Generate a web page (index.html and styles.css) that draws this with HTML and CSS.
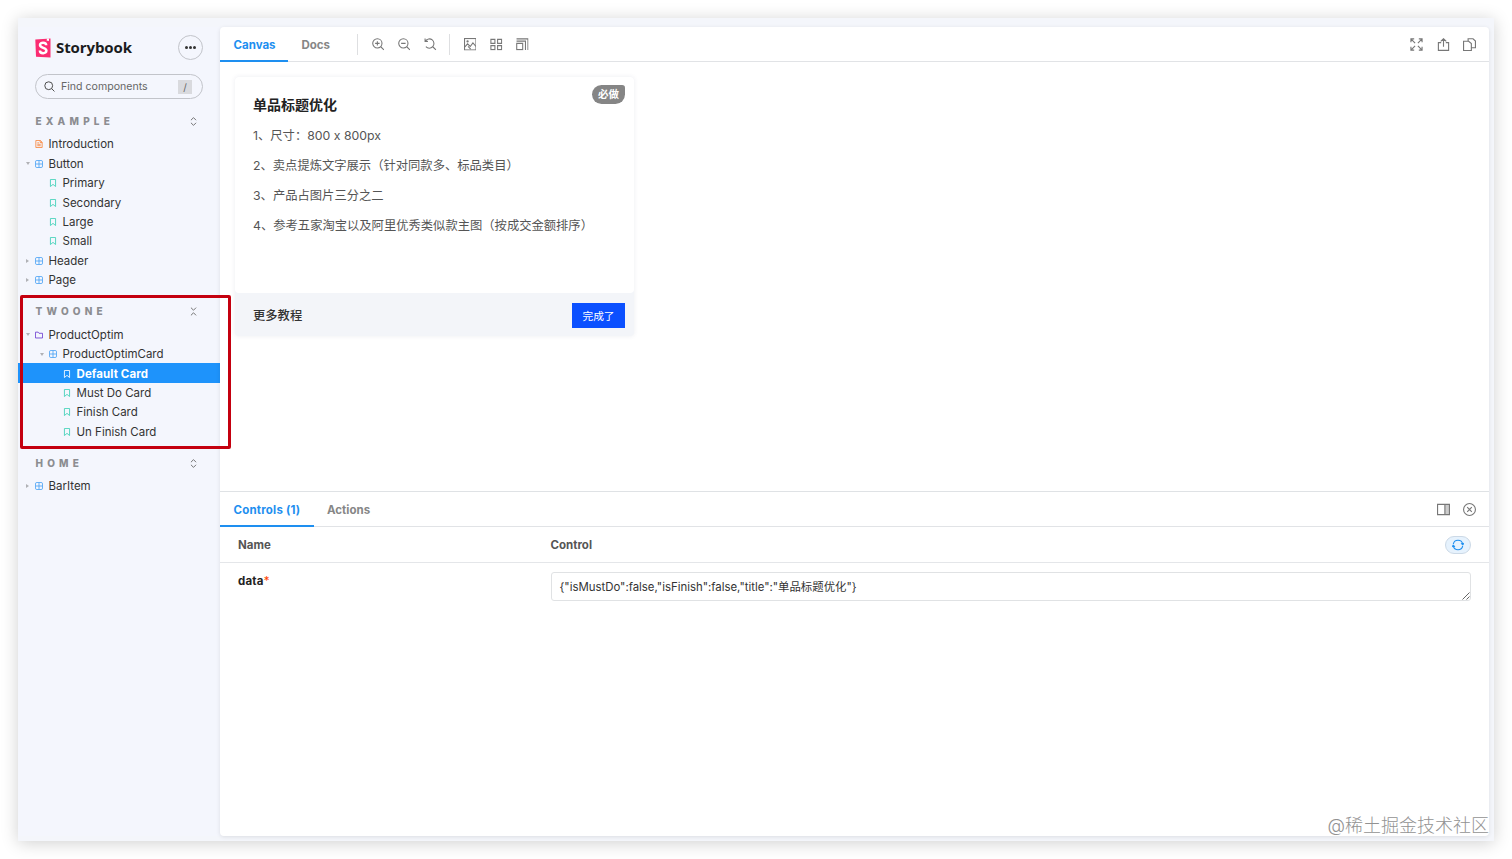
FILE: index.html
```
<!DOCTYPE html>
<html lang="zh-CN">
<head>
    <meta charset="UTF-8">
    <meta name="viewport" content="width=device-width, initial-scale=1.0">
    <title>Storybook</title>
    <link rel="stylesheet" href="styles.css">
</head>
<body>
    <!-- icon set -->
    <svg class="sprite">
        <symbol id="doc" viewBox="0 0 14 14"><path d="M1.5.8h8L12.5 4v9.2h-11zM9 1v3.5h3.5M4 5h3M4 7.5h6M4 10h6"/></symbol>
        <symbol id="component" viewBox="0 0 14 14"><rect x=".8" y=".8" width="12.4" height="12.4" rx="2.5"/><path d="M7 1v12M1 7h12"/></symbol>
        <symbol id="story" viewBox="0 0 14 14"><path d="M2.5.8h9v12.4L7 9.4l-4.500 3.800z"/></symbol>
        <symbol id="folder" viewBox="0 0 14 14"><path d="M.8 2h4.700l1.500 2h6.200v8.200H.8z"/></symbol>
        <symbol id="expand" viewBox="0 0 14 14"><path d="M3 5l4-4 4 4M3 9l4 4 4-4"/></symbol>
        <symbol id="collapse" viewBox="0 0 14 14"><path d="M3 1l4 4 4-4M3 13l4-4 4 4"/></symbol>
        <symbol id="search" viewBox="0 0 14 14"><circle cx="6" cy="6" r="5"/><path d="M9.700 9.700l3.600 3.600"/></symbol>
        <symbol id="zoomin" viewBox="0 0 14 14"><circle cx="6" cy="6" r="5.200"/><path d="M9.800 9.800l3.600 3.600M3.500 6h5M6 3.500v5"/></symbol>
        <symbol id="zoomout" viewBox="0 0 14 14"><circle cx="6" cy="6" r="5.200"/><path d="M9.800 9.800l3.600 3.600M3.500 6h5"/></symbol>
        <symbol id="zoomreset" viewBox="0 0 14 14"><path d="M1.700 3.200A5.200 5.200 0 1 1 2.100 9.700M1.200.6v3.200h3.200M9.800 9.800l3.600 3.600"/></symbol>
        <symbol id="photo" viewBox="0 0 14 14"><rect x=".6" y=".6" width="12.800" height="12.800"/><path d="M1 10l3-3.500 3 3 3-4 3.400 4M4.500 9.500l3 3"/><circle cx="4" cy="3.800" r=".7"/></symbol>
        <symbol id="grid" viewBox="0 0 14 14"><path d="M1 1.500h4.500v4.500H1zM8.500 1.500H13v4.500H8.500zM1 8.500h4.500V13H1zM8.500 8.500H13V13H8.500z"/></symbol>
        <symbol id="grow" viewBox="0 0 14 14"><path d="M.8 6h6.700v7H.8zM.6 1h12.800v12.500M.6 3.500h10v10"/></symbol>
        <symbol id="full" viewBox="0 0 14 14"><path d="M1 4.500V1h3.500M1 1l4.500 4.500M9.500 1H13v3.500M13 1L8.500 5.500M1 9.500V13h3.500M1 13l4.500-4.500M13 9.500V13H9.500M13 13L8.500 8.500"/></symbol>
        <symbol id="share" viewBox="0 0 14 14"><path d="M4.500 5H1.500v8.300h11V5h-3M7 9.500V1M4 3.700L7 .8l3 2.900"/></symbol>
        <symbol id="copy" viewBox="0 0 14 14"><path d="M5.500 3.200V.8h5.300l2.600 2.500v7.200H9M.6 3.500h5.500L9 6v7.400H.6z"/></symbol>
        <symbol id="side" viewBox="0 0 14 14"><path class="solid" d="M8.500 1.500h4.900v11H8.500z"/><path d="M.6 1.500h12.800v11H.6zM8.500 1.500v11"/></symbol>
        <symbol id="close" viewBox="0 0 14 14"><circle cx="7" cy="7" r="6.400"/><path d="M4.500 4.500l5 5M9.500 4.500l-5 5"/></symbol>
        <symbol id="sync" viewBox="0 0 14 14"><path d="M1.500 6A5.600 5.600 0 0 1 12.500 6M12.500 8A5.600 5.600 0 0 1 1.500 8M10.500 5l2.200 1.800L14 4.700M3.500 9L1.300 7.200 0 9.300"/></symbol>
    </svg>

    <div class="app">
        <div class="sidebar">
            <div class="brand">
                <svg class="logo" viewBox="0 0 16 20"><path fill="#fb2c72" d="M.3 1.500L15.500.5v19L1 18.800z"/><path fill="#fff" d="M11.800.5l2.200-.1v2.900l-1.100-.8-1.100.8z"/><path class="mark" d="M11.200 7.300c0-3.600-6.200-3.400-6.200-.3 0 3.400 6.400 2.500 6.400 5.700 0 3.400-6.500 3.200-6.500-.3"/></svg>
                <span class="name">Storybook</span>
                <div class="more"><i></i><i></i><i></i></div>
            </div>
            <div class="search">
                <svg class="icon"><use href="#search"/></svg>
                <span>Find components</span>
                <b>/</b>
            </div>

            <div class="section">
                <div class="heading">EXAMPLE<svg class="icon"><use href="#expand"/></svg></div>
                <ul>
                    <li class="doc"><svg class="icon"><use href="#doc"/></svg>Introduction</li>
                    <li class="component open"><svg class="icon"><use href="#component"/></svg>Button</li>
                    <li class="story lv2"><svg class="icon"><use href="#story"/></svg>Primary</li>
                    <li class="story lv2"><svg class="icon"><use href="#story"/></svg>Secondary</li>
                    <li class="story lv2"><svg class="icon"><use href="#story"/></svg>Large</li>
                    <li class="story lv2"><svg class="icon"><use href="#story"/></svg>Small</li>
                    <li class="component closed"><svg class="icon"><use href="#component"/></svg>Header</li>
                    <li class="component closed"><svg class="icon"><use href="#component"/></svg>Page</li>
                </ul>
            </div>
            <div class="section">
                <div class="heading">TWOONE<svg class="icon"><use href="#collapse"/></svg></div>
                <ul>
                    <li class="folder open"><svg class="icon"><use href="#folder"/></svg>ProductOptim</li>
                    <li class="component open lv2"><svg class="icon"><use href="#component"/></svg>ProductOptimCard</li>
                    <li class="story lv3 selected"><svg class="icon"><use href="#story"/></svg>Default Card</li>
                    <li class="story lv3"><svg class="icon"><use href="#story"/></svg>Must Do Card</li>
                    <li class="story lv3"><svg class="icon"><use href="#story"/></svg>Finish Card</li>
                    <li class="story lv3"><svg class="icon"><use href="#story"/></svg>Un Finish Card</li>
                </ul>
            </div>
            <div class="section">
                <div class="heading">HOME<svg class="icon"><use href="#expand"/></svg></div>
                <ul>
                    <li class="component closed"><svg class="icon"><use href="#component"/></svg>BarItem</li>
                </ul>
            </div>
        </div><!-- sidebar -->

        <div class="main">
            <div class="bar">
                <div class="tab active canvas-tab">Canvas</div>
                <div class="tab docs-tab">Docs</div>
                <div class="tools">
                    <svg class="icon"><use href="#zoomin"/></svg>
                    <svg class="icon"><use href="#zoomout"/></svg>
                    <svg class="icon"><use href="#zoomreset"/></svg>
                </div>
                <div class="tools">
                    <svg class="icon"><use href="#photo"/></svg>
                    <svg class="icon"><use href="#grid"/></svg>
                    <svg class="icon"><use href="#grow"/></svg>
                </div>
                <div class="right">
                    <svg class="icon"><use href="#full"/></svg>
                    <svg class="icon"><use href="#share"/></svg>
                    <svg class="icon"><use href="#copy"/></svg>
                </div>
            </div>
            <div class="preview">
                <div class="card">
                    <div class="card-body">
                        <span class="badge">必做</span>
                        <h3>单品标题优化</h3>
                        <p>1、尺寸：800 x 800px</p>
                        <p>2、卖点提炼文字展示（针对同款多、标品类目）</p>
                        <p>3、产品占图片三分之二</p>
                        <p>4、参考五家淘宝以及阿里优秀类似款主图（按成交金额排序）</p>
                    </div>
                    <div class="card-foot">
                        <span>更多教程</span>
                        <button>完成了</button>
                    </div>
                </div>
            </div>
            <div class="addons">
                <div class="bar">
                    <div class="tab active controls-tab">Controls (1)</div>
                    <div class="tab actions-tab">Actions</div>
                    <div class="right">
                        <svg class="icon"><use href="#side"/></svg>
                        <svg class="icon"><use href="#close"/></svg>
                    </div>
                </div>
                <div class="row head">
                    <span>Name</span>
                    <span>Control</span>
                    <div class="reset"><svg class="icon"><use href="#sync"/></svg></div>
                </div>
                <div class="row">
                    <span class="arg">data<em>*</em></span>
                    <div class="field"><span>{"isMustDo":false,"isFinish":false,"title":"单品标题优化"}</span><svg class="grip" viewBox="0 0 8 8"><path d="M.5 7.500l7-7M4.500 7.500l3-3"/></svg></div>
                </div>
            </div>
        </div><!-- main -->
    </div><!-- app -->

    <div class="highlight"></div>
    <div class="watermark">@稀土掘金技术社区</div>
</body>
</html>
```
FILE: styles.css
```
*{
    box-sizing: border-box;
}
html, body{
    height: 100%;
    margin: 0;
}
body{
    padding: 18px;
    background: #fff;
    font-family: Inter, "Noto Sans CJK SC", sans-serif;
    font-size: 11.5px;
    color: #333;
    overflow: hidden;
}
ul{
    list-style: none;
    margin: 0;
    padding: 0;
}
.sprite{
    display: none;
}
.icon{
    flex: none;
    width: 12px;
    height: 12px;
    fill: none;
    stroke: #777;
    stroke-width: 1.2;
}
.solid{
    fill: #ccc;
    stroke: none;
}
.app{
    display: flex;
    width: 1476px;
    height: 823px;
    padding: 9px 5px 5px 0;
    background: #f4f6fb;
    box-shadow: 0 2px 16px rgba(0,0,0,.19);
}

/* sidebar */
.sidebar{
    width: 202px;
    background: #f4f6fd;
}
.brand{
    display: flex;
    align-items: center;
    height: 25px;
    margin: 8px 17px 14px;
}
.logo{
    width: 16px;
    height: 20px;
}
.mark{
    fill: none;
    stroke: #fff;
    stroke-width: 2.5;
}
.name{
    margin-left: 5px;
    padding-bottom: 2px;
    font-family: "Open Sans", sans-serif;
    font-size: 15px;
    font-weight: 700;
    letter-spacing: -.1px;
    color: #1b1c1d;
}
.more{
    display: flex;
    justify-content: center;
    align-items: center;
    gap: 1px;
    width: 25px;
    height: 25px;
    margin-left: auto;
    border: 1px solid #c2c4ca;
    border-radius: 50%;
}
.more i{
    width: 3px;
    height: 3px;
    border-radius: 50%;
    background: #333;
}
.search{
    display: flex;
    align-items: center;
    height: 25px;
    margin: 0 17px 13.5px;
    padding: 0 10px 0 8px;
    border: 1px solid #c2c4ca;
    border-radius: 13px;
    font-size: 10.6px;
    color: #666;
}
.search .icon{
    width: 11px;
    height: 11px;
    margin-right: 6px;
    stroke: #444;
}
.search b{
    width: 14px;
    height: 14px;
    margin-left: auto;
    background: #d9dade;
    font-size: 10px;
    font-weight: 400;
    line-height: 14px;
    text-align: center;
}
.section{
    margin-bottom: 13.6px;
}
.heading{
    display: flex;
    justify-content: space-between;
    align-items: center;
    height: 18px;
    margin-bottom: 3.700px;
    padding: 0 22px 1px 17.5px;
    font-size: 10px;
    font-weight: 800;
    letter-spacing: 4.200px;
    color: #8c8d91;
}
.heading .icon{
    position: relative;
    top: .5px;
    width: 9px;
    height: 9px;
    stroke: #666;
    stroke-width: 1.4;
}
.section li{
    display: flex;
    align-items: center;
    height: 19.4px;
    padding-top: 1px;
    padding-left: 17px;
}
.section li.lv2{
    padding-left: 31px;
}
.section li.lv3{
    padding-left: 45px;
}
.section li .icon{
    width: 8px;
    height: 8px;
    margin-right: 5.5px;
    stroke-width: 1.5;
}
.doc .icon{ stroke: #f8873e; }
.section .component .icon{ stroke: #4ea4f5; }
.section .story .icon{ stroke: #3fd0b6; }
.section .folder .icon{ stroke: #6f3fd0; }
.open::before, .closed::before{
    content: "";
    width: 0;
    height: 0;
    margin-left: -9px;
    margin-right: 4px;
    border: 2.5px solid transparent;
    border-top: 3px solid #b0b1b5;
    border-bottom: 0;
}
.open::before{
    margin-right: 5px;
}
.closed::before{
    margin-right: 6px;
    border: 2px solid transparent;
    border-left: 3px solid #b0b1b5;
    border-right: 0;
}
.section .selected{
    background: #1e93fb;
    color: #fff;
    font-weight: 700;
    letter-spacing: .1px;
}
.section .selected .icon{
    stroke: #fff;
}

/* main */
.main{
    display: flex;
    flex-direction: column;
    flex: 1;
    background: #fff;
    border-radius: 4px;
    box-shadow: 0 1px 4px rgba(0,0,0,.1);
}
.bar{
    display: flex;
    align-items: center;
    height: 35px;
    border-bottom: 1px solid #e1e3e6;
    font-weight: 700;
    color: #868686;
}
.tab{
    height: 35px;
    padding: 0 13.5px;
    line-height: 36px;
    white-space: nowrap;
}
.tab.active{
    border-bottom: 2.500px solid #1e8ff0;
    color: #1e8ff0;
}
.canvas-tab{ width: 68px; }
.docs-tab{ width: 69px; }
.controls-tab{
    width: 93.5px;
    letter-spacing: .2px;
}
.tools{
    display: flex;
    align-items: center;
    gap: 14.3px;
    height: 21px;
    padding: 0 13px 0 14px;
    border-left: 1px solid #dedfe1;
}
.bar .icon{
    width: 13px;
    height: 13px;
}
.right{
    display: flex;
    gap: 13.5px;
    margin-left: auto;
    padding-right: 13px;
}
.tools .icon{
    width: 12.5px;
    height: 12.5px;
}
.tools{
    gap: 13.8px;
    padding: 1px 12.7px 0 13.500px;
}
.preview{
    height: 429px;
    padding: 15px;
}
.card{
    width: 399px;
    height: 259px;
    background: #f3f5f9;
    border-radius: 4px;
    box-shadow: 0 0 5px rgba(40,60,100,.09);
}
.card-body{
    position: relative;
    height: 216px;
    padding: 15px 18px;
    background: #fff;
    border-radius: 4px;
    font-size: 12.3px;
    color: #555;
}
.card h3{
    margin: 0 0 7px;
    font-size: 14px;
    font-weight: 700;
    line-height: 26px;
    color: #222;
}
.card p{
    height: 22px;
    margin: 0 0 8px;
    line-height: 22px;
    white-space: nowrap;
}
.badge{
    position: absolute;
    top: 8px;
    right: 9px;
    width: 33px;
    height: 19px;
    background: #858585;
    border-radius: 10px 3px 10px 10px;
    font-size: 10.5px;
    font-weight: 700;
    line-height: 19px;
    text-align: center;
    color: #fff;
}
.card-foot{
    display: flex;
    justify-content: space-between;
    align-items: center;
    height: 44px;
    padding: 0 9px 0 18px;
    font-size: 12.3px;
    font-weight: 500;
}
.card-foot button{
    width: 53px;
    height: 25px;
    padding: 0;
    border: 0;
    background: #0b50ff;
    font-family: inherit;
    font-size: 10.700px;
    color: #fff;
}
.addons{
    flex: 1;
    border-top: 1px solid #dfe2e5;
}
.row{
    display: grid;
    grid-template-columns: 312.5px 1fr auto;
    padding: 9px 18px;
}
.head{
    align-items: center;
    height: 36px;
    border-bottom: 1px solid #e4e6e9;
    font-weight: 700;
    color: #555;
}
.reset{
    display: flex;
    justify-content: center;
    align-items: center;
    width: 26px;
    height: 18px;
    border: 1px solid #ccd9e6;
    border-radius: 9px;
    background: #e6f2fd;
}
.reset .icon{
    stroke: #1e8ff0;
}
.arg{
    font-weight: 700;
    line-height: 19px;
    letter-spacing: .2px;
    color: #222;
}
.arg em{
    font-style: normal;
    font-weight: 400;
    color: #ff4400;
}
.field{
    display: flex;
    justify-content: space-between;
    align-items: center;
    grid-column: 2 / 4;
    height: 28.500px;
    padding-left: 8px;
    border: 1px solid #e0e2e4;
    border-radius: 3px;
    font-size: 11.4px;
}
.grip{
    align-self: flex-end;
    width: 8px;
    height: 8px;
    fill: none;
    stroke: #666;
}

/* annotation frame and watermark over the window */
.highlight{
    position: absolute;
    left: 20px;
    top: 295px;
    width: 211px;
    height: 154px;
    border: 3.500px solid #c4000f;
    border-radius: 2px;
}
.watermark{
    position: absolute;
    right: 23px;
    bottom: 20px;
    font-size: 18px;
    font-weight: 300;
    line-height: 26px;
    color: #929292;
}
```
